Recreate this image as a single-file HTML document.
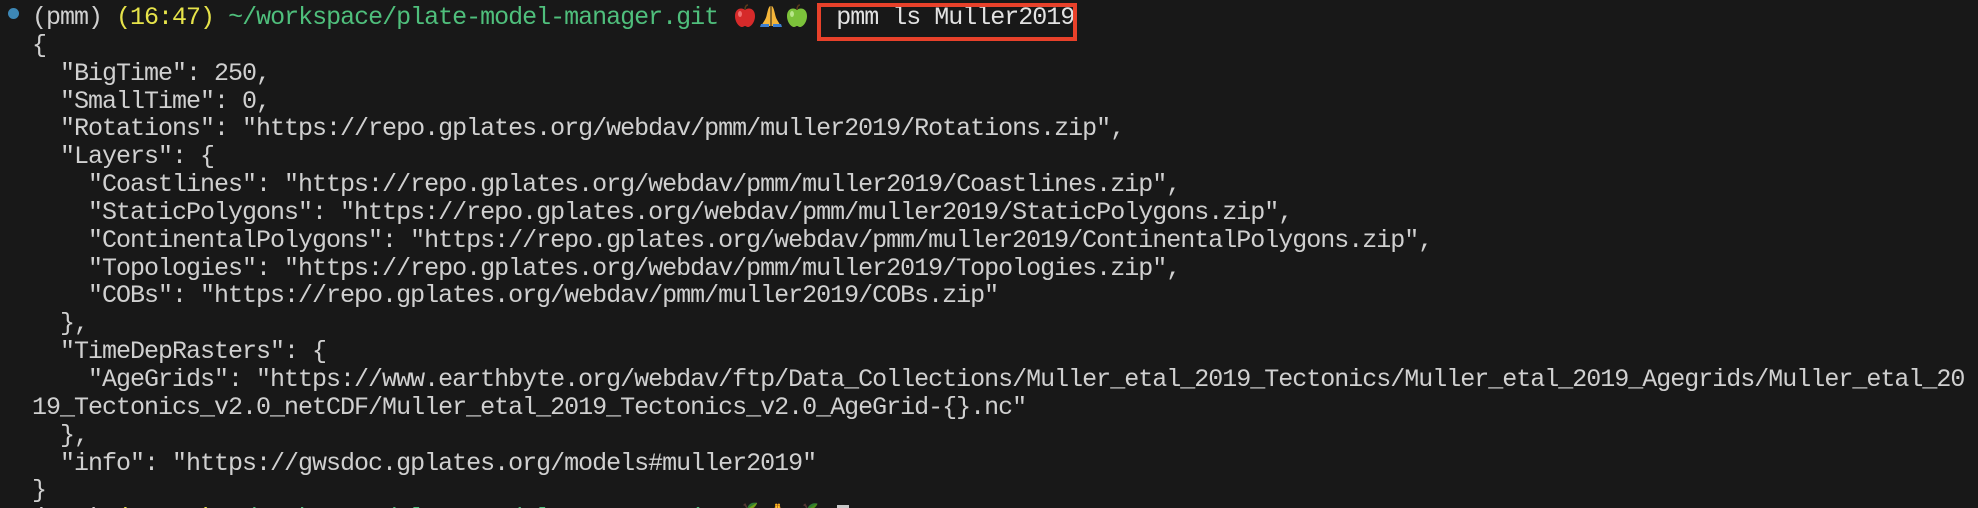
<!DOCTYPE html>
<html><head><meta charset="utf-8"><style>
html,body{margin:0;padding:0;background:#181818;width:1978px;height:508px;overflow:hidden}
.wrap{position:absolute;left:0;top:0;width:1978px;height:508px;overflow:hidden}
pre{position:absolute;left:32px;top:4px;margin:0;font-family:"Liberation Mono",monospace;font-size:25px;letter-spacing:-1px;line-height:27.85px;color:#d0d0d0;white-space:pre}
.y{color:#e6e34a}.g{color:#4fbf7c}.c{color:#e2e2e2;margin-left:12px}
.dot{position:absolute;left:8px;top:8px;width:11px;height:11px;border-radius:50%;background:#3d87b5}
.box{position:absolute;left:817px;top:3px;width:252px;height:30px;border:4px solid #e8412a}
.em{display:inline-block;width:26px;height:24px;vertical-align:-4px}
.cur{display:inline-block;width:12px;height:26px;background:#c8c8c8;vertical-align:-6px}
</style></head><body>
<div class="wrap">
<div class="dot"></div>
<pre>(pmm) <span class="y">(16:47)</span> <span class="g">~/workspace/plate-model-manager.git</span> <svg class="em" viewBox="0 0 26 24"><path d="M13 6c-3-3-10-2-10 6 0 6 4 11 7 11 1.5 0 2-1 3-1s1.5 1 3 1c3 0 7-5 7-11 0-8-7-9-10-6z" fill="#d62a2a"/><path d="M13 6c0-3 1-5 3-5" stroke="#5a3a1a" stroke-width="1.5" fill="none"/><ellipse cx="8" cy="10" rx="2" ry="3" fill="#f07070"/></svg><svg class="em" viewBox="0 0 26 24"><path d="M12.5 2c-2 0-3 6-4 10s-4 7-5 10h9z" fill="#f5b63a"/><path d="M13.5 2c2 0 3 6 4 10s4 7 5 10h-9z" fill="#f5b63a"/><path d="M3 20l-1 3h9v-3zM23 20l1 3h-9v-3z" fill="#3c7fd0"/></svg><svg class="em" viewBox="0 0 26 24"><path d="M13 6c-3-3-10-2-10 6 0 6 4 11 7 11 1.5 0 2-1 3-1s1.5 1 3 1c3 0 7-5 7-11 0-8-7-9-10-6z" fill="#7cc23a"/><path d="M13 6c0-3 1-5 3-5" stroke="#5a3a1a" stroke-width="1.5" fill="none"/><ellipse cx="8" cy="10" rx="2" ry="3" fill="#b8e68a"/></svg> <span class="c">pmm ls Muller2019</span>
{
  "BigTime": 250,
  "SmallTime": 0,
  "Rotations": "https://repo.gplates.org/webdav/pmm/muller2019/Rotations.zip",
  "Layers": {
    "Coastlines": "https://repo.gplates.org/webdav/pmm/muller2019/Coastlines.zip",
    "StaticPolygons": "https://repo.gplates.org/webdav/pmm/muller2019/StaticPolygons.zip",
    "ContinentalPolygons": "https://repo.gplates.org/webdav/pmm/muller2019/ContinentalPolygons.zip",
    "Topologies": "https://repo.gplates.org/webdav/pmm/muller2019/Topologies.zip",
    "COBs": "https://repo.gplates.org/webdav/pmm/muller2019/COBs.zip"
  },
  "TimeDepRasters": {
    "AgeGrids": "https://www.earthbyte.org/webdav/ftp/Data_Collections/Muller_etal_2019_Tectonics/Muller_etal_2019_Agegrids/Muller_etal_20
19_Tectonics_v2.0_netCDF/Muller_etal_2019_Tectonics_v2.0_AgeGrid-{}.nc"
  },
  "info": "https://gwsdoc.gplates.org/models#muller2019"
}
(pmm) <span class="y">(16:47)</span> <span class="g">~/workspace/plate-model-manager.git</span> <span class="y">🍎🙏🍏</span> <span class="cur"></span></pre>
<div class="box"></div>
</div>
</body></html>
